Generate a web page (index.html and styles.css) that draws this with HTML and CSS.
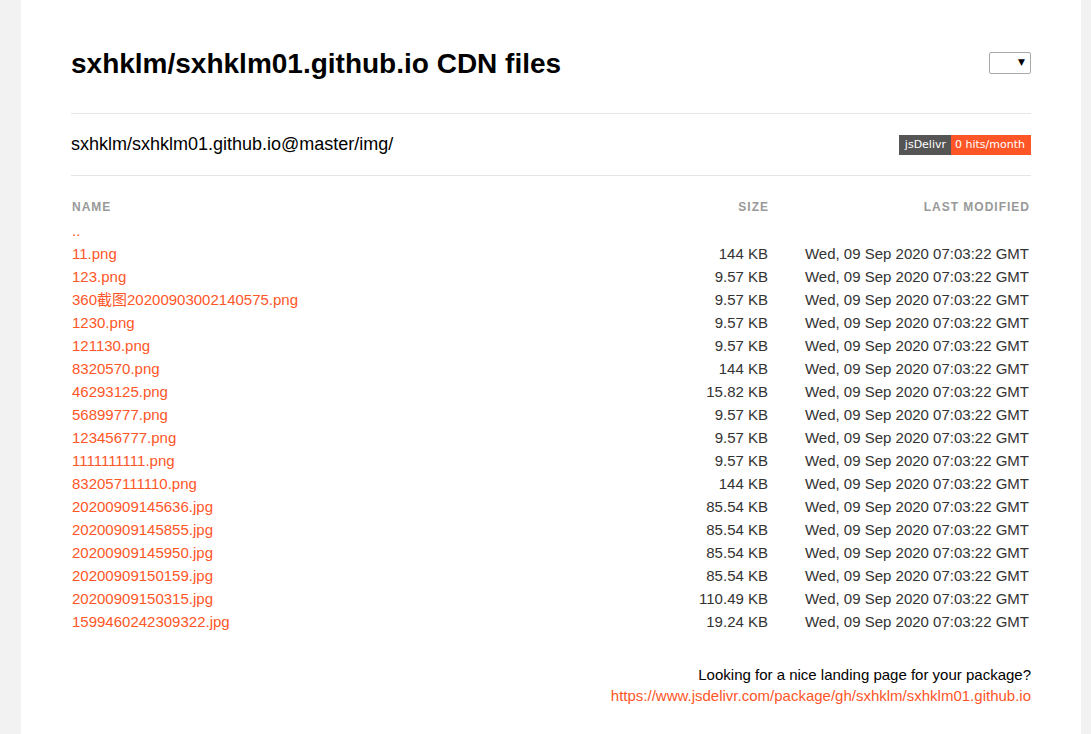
FILE: index.html
```html
<!DOCTYPE html>
<html>
<head>
<meta charset="utf-8">
<title>sxhklm/sxhklm01.github.io CDN files</title>
<link rel="stylesheet" href="styles.css">
</head>
<body>
<div class="page">
  <header class="top">
    <h1 class="title">sxhklm/sxhklm01.github.io CDN files</h1>
    <div class="select"><span class="caret">▼</span></div>
  </header>
  <div class="pathbar">
    <div class="path">sxhklm/sxhklm01.github.io@master/img/</div>
    <div class="badge"><span class="badge-l">jsDelivr</span><span class="badge-r">0 hits/month</span></div>
  </div>
  <div class="listing">
    <div class="row head"><span class="c-name">Name</span><span class="c-size">Size</span><span class="c-date">Last modified</span></div>
    <div class="row"><a class="c-name">..</a><span class="c-size"></span><span class="c-date"></span></div>
    <div class="row"><a class="c-name">11.png</a><span class="c-size">144 KB</span><span class="c-date">Wed, 09 Sep 2020 07:03:22 GMT</span></div>
    <div class="row"><a class="c-name">123.png</a><span class="c-size">9.57 KB</span><span class="c-date">Wed, 09 Sep 2020 07:03:22 GMT</span></div>
    <div class="row"><a class="c-name">360截图20200903002140575.png</a><span class="c-size">9.57 KB</span><span class="c-date">Wed, 09 Sep 2020 07:03:22 GMT</span></div>
    <div class="row"><a class="c-name">1230.png</a><span class="c-size">9.57 KB</span><span class="c-date">Wed, 09 Sep 2020 07:03:22 GMT</span></div>
    <div class="row"><a class="c-name">121130.png</a><span class="c-size">9.57 KB</span><span class="c-date">Wed, 09 Sep 2020 07:03:22 GMT</span></div>
    <div class="row"><a class="c-name">8320570.png</a><span class="c-size">144 KB</span><span class="c-date">Wed, 09 Sep 2020 07:03:22 GMT</span></div>
    <div class="row"><a class="c-name">46293125.png</a><span class="c-size">15.82 KB</span><span class="c-date">Wed, 09 Sep 2020 07:03:22 GMT</span></div>
    <div class="row"><a class="c-name">56899777.png</a><span class="c-size">9.57 KB</span><span class="c-date">Wed, 09 Sep 2020 07:03:22 GMT</span></div>
    <div class="row"><a class="c-name">123456777.png</a><span class="c-size">9.57 KB</span><span class="c-date">Wed, 09 Sep 2020 07:03:22 GMT</span></div>
    <div class="row"><a class="c-name">1111111111.png</a><span class="c-size">9.57 KB</span><span class="c-date">Wed, 09 Sep 2020 07:03:22 GMT</span></div>
    <div class="row"><a class="c-name">832057111110.png</a><span class="c-size">144 KB</span><span class="c-date">Wed, 09 Sep 2020 07:03:22 GMT</span></div>
    <div class="row"><a class="c-name">20200909145636.jpg</a><span class="c-size">85.54 KB</span><span class="c-date">Wed, 09 Sep 2020 07:03:22 GMT</span></div>
    <div class="row"><a class="c-name">20200909145855.jpg</a><span class="c-size">85.54 KB</span><span class="c-date">Wed, 09 Sep 2020 07:03:22 GMT</span></div>
    <div class="row"><a class="c-name">20200909145950.jpg</a><span class="c-size">85.54 KB</span><span class="c-date">Wed, 09 Sep 2020 07:03:22 GMT</span></div>
    <div class="row"><a class="c-name">20200909150159.jpg</a><span class="c-size">85.54 KB</span><span class="c-date">Wed, 09 Sep 2020 07:03:22 GMT</span></div>
    <div class="row"><a class="c-name">20200909150315.jpg</a><span class="c-size">110.49 KB</span><span class="c-date">Wed, 09 Sep 2020 07:03:22 GMT</span></div>
    <div class="row"><a class="c-name">1599460242309322.jpg</a><span class="c-size">19.24 KB</span><span class="c-date">Wed, 09 Sep 2020 07:03:22 GMT</span></div>
  </div>
  <footer class="foot">
    <div>Looking for a nice landing page for your package?</div>
    <a class="foot-link">https://www.jsdelivr.com/package/gh/sxhklm/sxhklm01.github.io</a>
  </footer>
</div>
</body>
</html>
```

FILE: styles.css
```css
html, body {
  margin: 0;
  padding: 0;
  background: #f2f2f2;
  font-family: "Liberation Sans", Arial, "Noto Sans CJK SC", sans-serif;
}

.page {
  width: 960px;
  margin-left: 21px;
  padding: 0 50px;
  background: #fff;
  min-height: 734px;
  box-sizing: content-box;
}

.top {
  display: flex;
  justify-content: space-between;
  align-items: center;
  padding-top: 48px;
  padding-bottom: 33px;
  border-bottom: 1px solid #e5e5e5;
}

.title {
  margin: 0;
  font-size: 28px;
  line-height: 32px;
  font-weight: bold;
  color: #000;
}

.select {
  width: 40px;
  height: 20px;
  border: 1px solid #a9a9a9;
  border-radius: 2px;
  position: relative;
  margin-top: -3px;
}

.caret {
  position: absolute;
  right: 5px;
  top: 4px;
  font-size: 9px;
  line-height: 10px;
  color: #000;
  font-family: "DejaVu Sans", sans-serif;
}

.pathbar {
  display: flex;
  justify-content: space-between;
  align-items: center;
  height: 61px;
  border-bottom: 1px solid #e5e5e5;
}

.path {
  font-size: 18px;
  color: #000;
  margin-top: -1px;
}

.badge {
  display: flex;
  height: 20px;
  font-family: "DejaVu Sans", Verdana, sans-serif;
  font-size: 11px;
  line-height: 20px;
  color: #fff;
}

.badge-l {
  background: #555;
  padding: 0 5px 0 6px;
}

.badge-r {
  background: #ff5627;
  padding: 0 6px 0 4px;
}

.listing {
  padding-top: 20px;
}

.row {
  display: grid;
  grid-template-columns: 1fr 120px 263px;
  height: 23px;
  line-height: 23px;
  font-size: 15px;
}

.c-name {
  padding-left: 1px;
  color: #ff5627;
  white-space: nowrap;
}

.c-size {
  text-align: right;
  color: #333;
}

.c-date {
  text-align: right;
  color: #333;
  padding-right: 2px;
}

.head {
  font-size: 12px;
  font-weight: bold;
  text-transform: uppercase;
  letter-spacing: 1px;
}

.head .c-name,
.head .c-size,
.head .c-date {
  color: #999;
}

.head .c-size,
.head .c-date {
  margin-right: -1px;
}

.foot {
  text-align: right;
  padding-top: 31px;
  font-size: 15px;
  line-height: 21px;
  color: #000;
}

.foot-link {
  color: #ff5627;
}
```
